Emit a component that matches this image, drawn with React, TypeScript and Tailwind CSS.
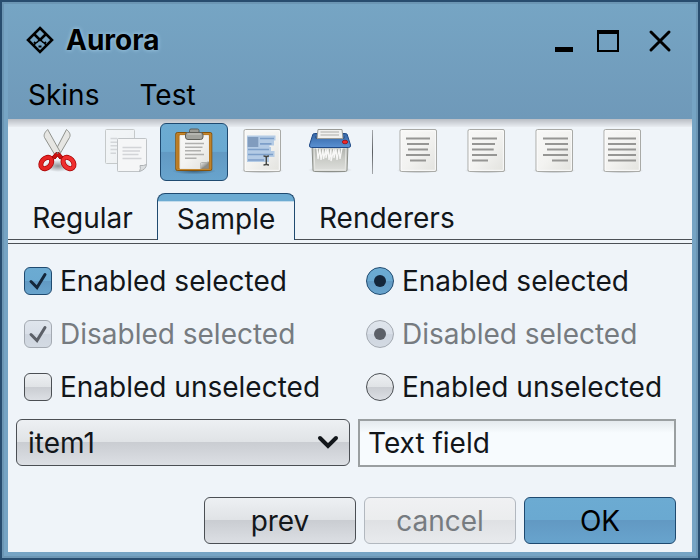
import React from "react";

const GREY =
  "bg-[linear-gradient(180deg,#edf0f3_0%,#e0e3e6_49%,#cacdd2_50%,#dcdfe4_100%)] border-[#4b4f54]";
const BLUE =
  "bg-[linear-gradient(180deg,#6cabd2_0%,#6aa9d1_49%,#6299c3_50%,#68a4cd_100%)] border-[#1f4a70]";
const FADED =
  "bg-[linear-gradient(180deg,#dfe5ed_0%,#d9dfe8_49%,#cfd6e0_50%,#d3dae3_100%)] border-[#a4aab2]";
const FADED_GREY =
  "bg-[linear-gradient(180deg,#f0f1f3_0%,#ebedee_49%,#dfe1e4_50%,#e8eaed_100%)] border-[#b2b8bf]";

function Icon({ children }: { children: React.ReactNode }) {
  return (
    <svg viewBox="0 0 48 48" className="size-12" fill="none" aria-hidden="true">
      {children}
    </svg>
  );
}

function Defs() {
  return (
    <svg className="absolute size-0" aria-hidden="true">
      <defs>
        <linearGradient id="page" x1="0" y1="0" x2="1" y2="1">
          <stop offset="0" stopColor="#f8f8f7" />
          <stop offset="0.5" stopColor="#f3f3f1" />
          <stop offset="1" stopColor="#e2e2de" />
        </linearGradient>
        <linearGradient id="curl" x1="0" y1="0" x2="1" y2="1">
          <stop offset="0" stopColor="#ffffff" />
          <stop offset="0.6" stopColor="#9b9c98" />
          <stop offset="1" stopColor="#555753" />
        </linearGradient>
        <linearGradient id="bin" x1="0" y1="0" x2="0" y2="1">
          <stop offset="0" stopColor="#a9aca6" />
          <stop offset="0.5" stopColor="#c9cbc6" />
          <stop offset="1" stopColor="#dfe0dd" />
        </linearGradient>
        <linearGradient id="lid" x1="0" y1="0" x2="0" y2="1">
          <stop offset="0" stopColor="#3465a4" />
          <stop offset="1" stopColor="#5a91d3" />
        </linearGradient>
        <radialGradient id="shade">
          <stop offset="0" stopColor="#000" stopOpacity="0.4" />
          <stop offset="1" stopColor="#000" stopOpacity="0" />
        </radialGradient>
      </defs>
    </svg>
  );
}

function Cut() {
  return (
    <Icon>
      <ellipse cx="24" cy="38" rx="14" ry="6" fill="url(#shade)" />
      <path d="M32.500 1.500C36 4.500 36.800 7 35.500 9.500L25 27.500L20.500 24.500Z" fill="#e6e6e3" stroke="#90928d" />
      <path d="M13.700 1.500C10.500 4.500 9.500 7 10.500 9.500L21.500 28L26.500 24.500Z" fill="#e6e6e3" stroke="#90928d" />
      <path d="M18 29L22 24.500L25 24.500L29 29L26 31L23.500 28L21 31Z" fill="#cc1010" stroke="#a40000" />
      <ellipse cx="12.300" cy="35" rx="4.600" ry="6.400" transform="rotate(42 12.300 35)" stroke="#a40000" strokeWidth="5" />
      <ellipse cx="12.300" cy="35" rx="4.600" ry="6.400" transform="rotate(42 12.300 35)" stroke="#e52424" strokeWidth="3.600" />
      <ellipse cx="34.500" cy="35" rx="4.600" ry="6.400" transform="rotate(-42 34.500 35)" stroke="#a40000" strokeWidth="5" />
      <ellipse cx="34.500" cy="35" rx="4.600" ry="6.400" transform="rotate(-42 34.500 35)" stroke="#ef2f2f" strokeWidth="3.600" />
      <circle cx="23.500" cy="25" r="1" fill="#777" />
    </Icon>
  );
}

function Copy() {
  return (
    <Icon>
      <g opacity="0.4">
        <rect x="3.500" y="1.500" width="29" height="34" rx="1" fill="url(#page)" stroke="#888a85" />
        <path d="M8.500 10.500H15M8.500 14.200H15M8.500 17.800H15M8.500 21.500H15M8.500 25.200H14" stroke="#aaa" strokeWidth="1.500" />
      </g>
      <path d="M16.300 10.500H43.700Q44.500 10.500 44.500 11.300V36.500L37.500 43.500H16.300Q15.500 43.500 15.500 42.700V11.300Q15.500 10.500 16.300 10.500Z" fill="#f5f6f7" stroke="#bfc3c6" />
      <path d="M37.500 43.500Q39 40.500 38 37.500Q41.500 38 44.500 36.500Q44 41.500 37.500 43.500Z" fill="#dcdfe1" stroke="#aeb2b5" />
      <path d="M20.500 19.500H39.500M20.500 23H38M20.500 26.500H36.500M20.500 30.500H39.500" stroke="#d2d4d7" strokeWidth="1.600" />
    </Icon>
  );
}

function Paste() {
  return (
    <Icon>
      <ellipse cx="24" cy="43" rx="22" ry="3.500" fill="url(#shade)" />
      <rect x="5.800" y="4.500" width="36" height="38" rx="1.500" fill="#b87820" stroke="#85520a" />
      <rect x="6.800" y="5.500" width="34" height="36" rx="1" stroke="#c48830" />
      <path d="M10 7.500H38.500V34L31 40.500H10Z" fill="url(#page)" stroke="#e9e9e6" />
      <path d="M30.500 40.800V35.500Q30.500 34 32 34H38.800V40.800Z" fill="#8b8c88" />
      <path d="M29.800 40.800Q31.500 38 31 34.500Q35 35 38.800 33Q38 38 29.800 40.800Z" fill="url(#curl)" />
      <path d="M19.500 5V2.500Q19.500 1 21 1H27.500Q29 1 29 2.500V5" fill="#9a9b95" stroke="#5d5e58" />
      <path d="M17.500 4.500H31Q33 4.500 33 7V9Q33 11.500 30.500 11.500H18Q15.500 11.500 15.500 9V7Q15.500 4.500 17.500 4.500Z" fill="#a2a39d" stroke="#5d5e58" />
      <path d="M17.500 6H31" stroke="#c8c9c4" />
      <path d="M15 15.500H34M15 19.200H32.500M15 22.800H31M15 26.500H34M15 30.200H26.500" stroke="#b0b0ae" strokeWidth="1.500" />
    </Icon>
  );
}

function Page({ children }: { children: React.ReactNode }) {
  return (
    <Icon>
      <ellipse cx="24" cy="42.500" rx="21.500" ry="3" fill="url(#shade)" />
      <rect x="6" y="1.500" width="36.500" height="42" rx="1.500" fill="url(#page)" stroke="#a9aaa7" />
      <rect x="7.300" y="2.800" width="34" height="39.500" rx="0.500" stroke="#fbfbfa" />
      {children}
    </Icon>
  );
}

function SelectAll() {
  return (
    <Page>
      <path d="M9 7.500H37.500V12.500H36V17.500H31.500V19H33V23H36.500V29H31V34H9Z" fill="#b4cbe5" />
      <rect x="9.700" y="9" width="10.600" height="10" fill="#819cbe" />
      <path d="M22 10.500H36M22 15.800H33.500M10 21.500H31M10 26.500H35M10 32H26" stroke="#7d9fc9" strokeWidth="1.700" />
      <path d="M25.500 28Q28.300 28 28.300 29.500Q28.300 28 31 28M28.300 29V36M25.500 37Q28.300 37 28.300 35.500Q28.300 37 31 37" stroke="#444643" strokeWidth="1.400" />
    </Page>
  );
}

function Shred() {
  return (
    <Icon>
      <ellipse cx="24" cy="42" rx="22" ry="3.500" fill="url(#shade)" />
      <path d="M6 18H42L41 42Q40.900 43.500 39.500 43.500H8.500Q7.100 43.500 7 42Z" fill="url(#bin)" stroke="#8d908a" />
      <path d="M8 20H40L39.200 41.800H8.800Z" stroke="#e6e7e4" />
      <path d="M11 20L12 31L14 21L15 32L17 21L17.500 31L20 21L20 30L22 21L23 32L25 21L25 33L28 21L28 30L30 21L31 32L33 21L34 31L36 20" stroke="#f7f7f6" strokeWidth="1.300" />
      <path d="M6.800 6.500Q7.200 5.500 8.500 5.500H39.500Q40.800 5.500 41.200 6.500L44.500 17Q45 19.500 42.500 19.500H5.500Q3 19.500 3.500 17Z" fill="url(#lid)" stroke="#204a87" />
      <path d="M9 8.500H39L38 11H10Z" fill="#25487c" />
      <path d="M12 1.500H36L37 10.500H11Z" fill="#f1f1ef" stroke="#9a9b97" />
      <path d="M14.500 4H33M14.500 7H33" stroke="#c3c3c1" strokeWidth="1.300" />
      <ellipse cx="39" cy="14" rx="2.700" ry="1.800" fill="#ef2929" stroke="#a40000" strokeWidth="0.700" />
    </Icon>
  );
}

function Align({ d }: { d: string }) {
  return (
    <Page>
      <path d={d} stroke="#969694" strokeWidth="2" />
    </Page>
  );
}

const EDIT = [
  { name: "Cut", icon: <Cut /> },
  { name: "Copy", icon: <Copy />, disabled: true },
  { name: "Paste", icon: <Paste />, active: true },
  { name: "Select all", icon: <SelectAll /> },
  { name: "Delete", icon: <Shred /> },
];

const ALIGN = [
  { name: "Center", d: "M12 10.500H36M13 16H35M14 21.500H34M12 27H36M16 32.500H32" },
  { name: "Left", d: "M10 10.500H35M10 16H33M10 21.500H31.700M10 27H35M10 32.500H26" },
  { name: "Right", d: "M38 10.500H13M38 16H15M38 21.500H17M38 27H13M38 32.500H22" },
  { name: "Justify", d: "M10 10.500H38M10 16H38M10 21.500H38M10 27H38M10 32.500H38" },
];

function Tool({
  name,
  active,
  disabled,
  children,
}: {
  name: string;
  active?: boolean;
  disabled?: boolean;
  children: React.ReactNode;
}) {
  return (
    <button
      type="button"
      aria-label={name}
      aria-pressed={active}
      disabled={disabled}
      className={`flex h-[58px] w-[68px] shrink-0 items-center justify-center rounded-md border ${
        active ? BLUE : "border-transparent"
      }`}
    >
      {children}
    </button>
  );
}

function Choice({
  type,
  label,
  name,
  checked,
  disabled,
}: {
  type: "checkbox" | "radio";
  label: string;
  name?: string;
  checked?: boolean;
  disabled?: boolean;
}) {
  const round = type === "radio";
  const fill = checked ? (disabled ? FADED : BLUE) : GREY;
  const ink = disabled ? "text-[#5c6068]" : "text-[#14263a]";
  return (
    <label className={`flex items-center gap-2 ${disabled ? "text-[#767b80]" : "text-[#12161a]"}`}>
      <span className="grid shrink-0 place-items-center">
        <input
          type={type}
          name={name}
          defaultChecked={checked}
          disabled={disabled}
          className={`col-start-1 row-start-1 size-7 appearance-none border ${
            round ? "rounded-full" : "rounded-md"
          } ${fill}`}
        />
        {checked && (
          <svg viewBox="0 0 28 28" className={`pointer-events-none col-start-1 row-start-1 size-7 ${ink}`} aria-hidden="true">
            {round ? (
              <circle cx="14" cy="14" r="6" fill="currentColor" />
            ) : (
              <path d="M7 14.500L13 20.500L21 7.500" fill="none" stroke="currentColor" strokeWidth="3" strokeLinecap="round" />
            )}
          </svg>
        )}
      </span>
      <span className="whitespace-nowrap">{label}</span>
    </label>
  );
}

export default function App() {
  return (
    <div className="min-h-screen border-2 border-[#284d6f] bg-[#6c96b4] p-[2px] font-['Inter','Liberation_Sans',sans-serif] text-[28px] leading-8 text-[#12161a]">
      <Defs />
      <div className="flex min-h-[calc(100vh-8px)] flex-col bg-[#76a4c4] px-1 pb-1">
        <header className="bg-linear-to-b from-[#76a5c4] to-[#6f99b9] text-black">
          <div className="flex h-[72px] items-center pr-4 pl-[18px]">
            <svg viewBox="0 0 28 28" className="size-7" fill="none" stroke="#000" strokeWidth="2.600" aria-hidden="true">
              <path d="M14 2L26 14L14 26L2 14Z" />
              <path d="M8 8L14 14L20 8" />
              <path d="M7.500 19.500L11 16M20.500 19.500L17 16M14 13L17 16.500M14 13L11 16.500" strokeWidth="1.400" />
              <path d="M8 16L9.500 17.500M20 16L18.500 17.500M12.500 20.500H15.500" strokeWidth="1.800" />
            </svg>
            <h1 className="ml-3 grow font-bold [text-shadow:0_0_4px_#a9d3ec]">Aurora</h1>
            <div className="flex">
              <button type="button" aria-label="Minimize" className="mr-3 flex size-8 items-center justify-center">
                <svg viewBox="0 0 32 32" className="size-8" aria-hidden="true">
                  <path d="M7 23H25V28H7Z" />
                </svg>
              </button>
              <button type="button" aria-label="Maximize" className="mr-5 flex size-8 items-center justify-center">
                <svg viewBox="0 0 32 32" className="size-8" aria-hidden="true">
                  <path fillRule="evenodd" d="M5 6H27V28H5ZM7 10V26H25V10Z" />
                </svg>
              </button>
              <button type="button" aria-label="Close" className="flex size-8 items-center justify-center">
                <svg viewBox="0 0 32 32" className="size-8" stroke="#000" strokeWidth="3" strokeLinecap="round" aria-hidden="true">
                  <path d="M7 8L25 26M25 8L7 26" />
                </svg>
              </button>
            </div>
          </div>
          <nav className="flex h-[43px] gap-10 px-5 pt-[3px]">
            <button type="button" className="h-8">Skins</button>
            <button type="button" className="h-8">Test</button>
          </nav>
        </header>

        <main className="flex grow flex-col bg-[#eff4f9]">
          <div className="flex bg-[linear-gradient(180deg,#b9bdc4_0px,#e9edf2_8px,#eff4f9_8px)] px-4 pt-1">
            {EDIT.map((t) => (
              <Tool key={t.name} name={t.name} active={t.active} disabled={t.disabled}>
                {t.icon}
              </Tool>
            ))}
            <div className="mr-[11px] ml-2 h-11 w-px self-center bg-linear-to-b from-[#a6a9ad] via-[#5c5f63] to-[#a6a9ad]" />
            {ALIGN.map((t) => (
              <Tool key={t.name} name={t.name}>
                <Align d={t.d} />
              </Tool>
            ))}
          </div>

          <div role="tablist" className="mt-3 flex h-[47px]">
            <button type="button" role="tab" className="w-[149px] border-b border-[#4b5056] pt-1">
              Regular
            </button>
            <button
              type="button"
              role="tab"
              aria-selected="true"
              className="w-[138px] rounded-t-lg border border-b-0 border-[#1f4a70] bg-[linear-gradient(180deg,#6cabd2_0px,#6cabd2_7px,#c3dcec_7px,#c3dcec_8px,#eff4f9_8px)] pt-[3px]"
            >
              Sample
            </button>
            <button type="button" role="tab" className="grow border-b border-[#4b5056] pt-1 pl-6 text-left">
              Renderers
            </button>
          </div>
          <div className="mt-[3px] border-t border-[#4b5056]" />

          <form className="flex grow flex-col pr-4 pl-2" onSubmit={(e) => e.preventDefault()}>
            <div className="grid grid-cols-[334fr_318fr] gap-x-2 pt-[11px]">
              <div className="flex flex-col gap-[21px] py-[10px] pl-2">
                <Choice type="checkbox" label="Enabled selected" checked />
                <Choice type="checkbox" label="Disabled selected" checked disabled />
                <Choice type="checkbox" label="Enabled unselected" />
              </div>
              <div className="flex flex-col gap-[21px] py-[10px] pl-2">
                <Choice type="radio" name="enabled" label="Enabled selected" checked />
                <Choice type="radio" name="disabled" label="Disabled selected" checked disabled />
                <Choice type="radio" name="enabled" label="Enabled unselected" />
              </div>
              <div className="relative mt-[6px]">
                <select aria-label="Item" className={`h-[47px] w-full appearance-none rounded-md border pr-12 pl-[11px] ${GREY}`}>
                  <option>item1</option>
                  <option>item2</option>
                  <option>item3</option>
                </select>
                <svg viewBox="0 0 24 24" className="pointer-events-none absolute top-[11px] right-[10px] size-6" fill="none" stroke="#12161a" strokeWidth="4" strokeLinecap="round" aria-hidden="true">
                  <path d="M4 8L12 16L20 8" />
                </svg>
              </div>
              <input
                type="text"
                aria-label="Text field"
                defaultValue="Text field"
                className="mt-[6px] h-12 w-full min-w-0 border-2 border-[#9a9fa1] bg-[linear-gradient(180deg,#e4e9ed_0px,#f7fbfe_12px)] px-2"
              />
            </div>
            <div className="mt-auto flex justify-end gap-2 pb-2">
              <button type="button" className={`h-[47px] w-[152px] rounded-md border ${GREY}`}>prev</button>
              <button type="button" disabled className={`h-[47px] w-[152px] rounded-md border text-[#767b80] ${FADED_GREY}`}>cancel</button>
              <button type="submit" className={`h-[47px] w-[152px] rounded-md border text-black ${BLUE}`}>OK</button>
            </div>
          </form>
        </main>
      </div>
    </div>
  );
}
